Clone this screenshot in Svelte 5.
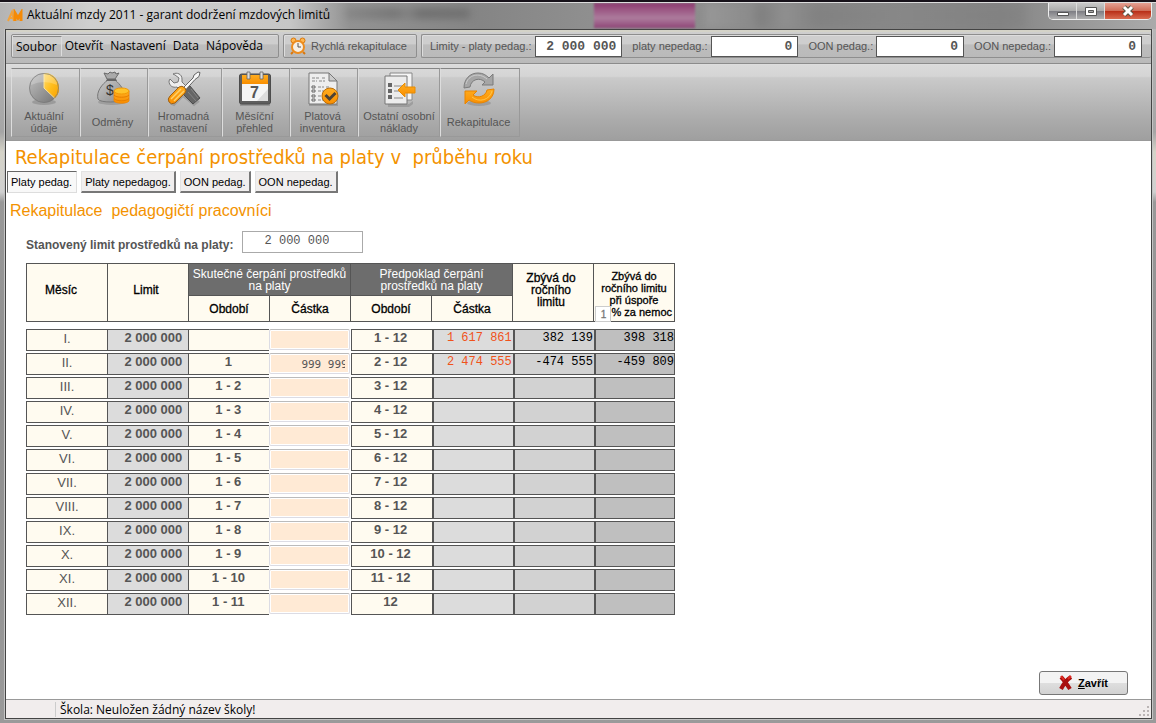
<script lang="ts">
  interface Row {
    month: string;
    actual: string;
    amount?: string;
    forecast: string;
    expected?: string;
    left?: string;
    leftSick?: string;
  }

  const menu = ["Soubor", "Otevřít", "Nastavení", "Data", "Nápověda"];

  const limits = [
    { id: "lim-ped", label: "Limity - platy pedag.:", value: "2 000 000" },
    { id: "lim-neped", label: "platy nepedag.:", value: "0" },
    { id: "oon-ped", label: "OON pedag.:", value: "0" },
    { id: "oon-neped", label: "OON nepedag.:", value: "0" },
  ];

  const tools = [
    { icon: "pie", label: "Aktuální údaje", width: 69 },
    { icon: "bag", label: "Odměny", width: 68 },
    { icon: "tools", label: "Hromadná nastavení", width: 74 },
    { icon: "calendar", label: "Měsíční přehled", width: 68 },
    { icon: "inventory", label: "Platová inventura", width: 68 },
    { icon: "costs", label: "Ostatní osobní náklady", width: 82 },
    { icon: "refresh", label: "Rekapitulace", width: 80 },
  ];

  const tabs = ["Platy pedag.", "Platy nepedagog.", "OON pedag.", "OON nepedag."];
  let activeTab = $state(0);

  let limit = $state("2 000 000");
  let sickPercent = $state("1");

  let rows: Row[] = $state([
    { month: "I.", actual: "", forecast: "1 - 12", expected: "1 617 861", left: "382 139", leftSick: "398 318" },
    { month: "II.", actual: "1", amount: "999 999", forecast: "2 - 12", expected: "2 474 555", left: "-474 555", leftSick: "-459 809" },
    { month: "III.", actual: "1 - 2", forecast: "3 - 12" },
    { month: "IV.", actual: "1 - 3", forecast: "4 - 12" },
    { month: "V.", actual: "1 - 4", forecast: "5 - 12" },
    { month: "VI.", actual: "1 - 5", forecast: "6 - 12" },
    { month: "VII.", actual: "1 - 6", forecast: "7 - 12" },
    { month: "VIII.", actual: "1 - 7", forecast: "8 - 12" },
    { month: "IX.", actual: "1 - 8", forecast: "9 - 12" },
    { month: "X.", actual: "1 - 9", forecast: "10 - 12" },
    { month: "XI.", actual: "1 - 10", forecast: "11 - 12" },
    { month: "XII.", actual: "1 - 11", forecast: "12" },
  ]);
</script>

{#snippet toolIcon(name: string)}
  <svg class="tool-icon" viewBox="0 0 36 36" aria-hidden="true">
    {#if name === "pie"}
      <ellipse cx="18" cy="31" rx="12" ry="3" fill="#777" opacity=".45" />
      <circle cx="18" cy="17" r="15" fill="url(#grey)" />
      <path d="M18 17V2a15 15 0 0 1 11 25.300z" fill="url(#gold)" />
      <path d="M18 2v15l11 10.500" fill="none" stroke="#fbe29a" />
      <circle cx="18" cy="17" r="14.500" fill="none" stroke="#777" opacity=".7" />
      <path d="M5 14a13 11 0 0 1 26 0q-13-6-26 0z" fill="#fff" opacity=".22" />
    {:else if name === "bag"}
      <ellipse cx="17" cy="31" rx="14" ry="3" fill="#777" opacity=".4" />
      <path d="M13 9C7 13 1 21 3 28c1 4 24 4 26 0 2-8-4-15-9-19z" fill="url(#bag)" stroke="#777" />
      <path d="M12 8 9 2l4 1 2-2 2 1 3-1 1 2 3-1-4 6z" fill="#aaa" stroke="#696969" />
      <path d="M12 8h9l1 2H11z" fill="#666" />
      <text x="11" y="24" class="dollar">$</text>
      <path d="M19 20v10c2 3 13 3 15 0V20z" fill="url(#coin)" stroke="#f08500" stroke-width=".8" />
      <ellipse cx="26.500" cy="20" rx="7.500" ry="3" fill="#ffc329" stroke="#f39a05" />
      <path d="M19 24c2 3 13 3 15 0M19 27.500c2 3 13 3 15 0" fill="none" stroke="#e77e00" />
    {:else if name === "tools"}
      <path d="m4 32 4 2 9-9 11 9 5-4" fill="none" stroke="#777" stroke-width="2" opacity=".4" />
      <path d="m19 19 5-4 10 12-7 6-10-10z" fill="#666" stroke="#4d4d4d" />
      <path d="m22 21 8 9m-5-12 7 9" stroke="#858585" />
      <path d="M7 3c4-2 9 0 9 5v3l5 5-5 5-5-5c-4 1-8-1-8-6l1-2 4 4 4-1 1-4-4-3z" fill="#eee" stroke="#777" />
      <path d="m17 17 10-10 1-3 4-3 2 .5-1 4-4 3-9 10z" fill="#f7f7f7" stroke="#666" />
      <path d="M13 16q3-2 6 1 2 3 0 5L9 32q-4 2-6-1t1-6z" fill="url(#coin)" stroke="#9d6015" />
      <path d="m5 28 10-10m-7 12 10-10" stroke="#ffd16a" stroke-width="1.500" />
    {:else if name === "calendar"}
      <path d="M3 33h30v2H3z" fill="#777" opacity=".5" />
      <rect x="2.500" y="3" width="31" height="30" rx="2" fill="#5e5e5e" stroke="#4c4c4c" />
      <path d="M5 13h26v17H5z" fill="#f6f6f6" />
      <path d="M20 30 31 18v12z" fill="#ddd" />
      <path d="M5 4h26v9H5z" fill="url(#coin)" />
      <path d="M10 1h3v7h-3zM23 1h3v7h-3z" fill="#ddd" stroke="#666" stroke-width=".8" />
      <text x="13" y="27" class="day">7</text>
    {:else if name === "inventory"}
      <path d="M4 33h29v2H4z" fill="#777" opacity=".45" />
      <path d="M4 2h20l8 8v23H4z" fill="#eee" stroke="#777" />
      <path d="M24 2v8h8z" fill="#ccc" stroke="#777" />
      <path d="M7 7h8m2 0h4M7 10h5m2 0h6M13 16h6m2 0h4M13 20h7M13 25h5M13 29h6" stroke="#888" stroke-dasharray="3 1" />
      <path d="M7 15h3v2H7zM7 19h3v2H7zM7 24h3v2H7zM7 28h3v2H7z" fill="none" stroke="#666" />
      <circle cx="25" cy="25" r="8" fill="url(#coin)" stroke="#b96d0a" />
      <path d="m20.500 24 4 4 6-6" fill="none" stroke="#4d4335" stroke-width="3" />
    {:else if name === "costs"}
      <path d="M7 33h21l4-3v3l-4 3H7z" fill="#777" opacity=".4" />
      <path d="M9 2h22v27H9z" fill="#f5f5f5" stroke="#888" />
      <path d="M4 5h22v28H4z" fill="#ececec" stroke="#777" />
      <path d="M7 12h4v4H7zM7 18h4v4H7zM7 24h4v4H7z" fill="#666" />
      <path d="M13 15h9M13 20h9M13 27h9" stroke="#888" />
      <path d="M17 19 24 12v4h10v6H24v4z" fill="url(#coin)" stroke="#e88b00" />
    {:else if name === "refresh"}
      <ellipse cx="18" cy="32" rx="12" ry="3" fill="#777" opacity=".4" />
      <path d="M3 17C3 8 9 2 17 2c5 0 8 2 11 5l4-4v11H21l3-3c-5-5-14-3-15 5z" fill="#a6a6a6" stroke="#7b7b7b" />
      <path d="M5 13C7 4 18 1 26 8" fill="none" stroke="#cdcdcd" />
      <path d="M33 18c0 9-7 14-15 14-4 0-7-1-10-3l-4 4V20h12l-4 4c5 4 13 1 14-5z" fill="url(#coin)" stroke="#e88400" />
      <path d="M31 20c-2 9-13 12-20 6" fill="none" stroke="#ffc54a" />
    {/if}
  </svg>
{/snippet}

<svg class="defs" aria-hidden="true">
  <defs>
    <linearGradient id="grey" x1="0" y1="0" x2="1" y2="1">
      <stop offset="0" stop-color="#c4c4c4" />
      <stop offset=".5" stop-color="#9a9a9a" />
      <stop offset="1" stop-color="#707070" />
    </linearGradient>
    <linearGradient id="bag" x1="0" y1="0" x2="1" y2="1">
      <stop offset="0" stop-color="#c8c8c8" />
      <stop offset="1" stop-color="#8c8c8c" />
    </linearGradient>
    <linearGradient id="gold" x1="0" y1="0" x2="1" y2="1">
      <stop offset="0" stop-color="#ffdd70" />
      <stop offset=".5" stop-color="#ffbe1e" />
      <stop offset="1" stop-color="#f8a000" />
    </linearGradient>
    <linearGradient id="coin" x1="0" y1="0" x2="0" y2="1">
      <stop offset="0" stop-color="#ffad1f" />
      <stop offset="1" stop-color="#f98e00" />
    </linearGradient>
  </defs>
</svg>

<div class="window">
  <header class="titlebar">
    <div class="reflection word"></div>
    <div class="reflection pink"></div>
    <div class="reflection shade"></div>
    <svg class="app-icon" viewBox="0 0 16 14" aria-hidden="true">
      <path d="m1 12 4-9 2 9M3 9h4" fill="none" stroke="#f2a23a" stroke-width="2" />
      <path d="M8 12V4l3 5 3-5v8" fill="none" stroke="#f58a06" stroke-width="3" />
    </svg>
    <span class="caption">Aktuální mzdy 2011 - garant dodržení mzdových limitů</span>
    <div class="window-buttons">
      <button aria-label="Minimalizovat">
        <svg width="14" height="14" viewBox="0 0 14 14"><path d="M1.500 8.500h11v3h-11z" fill="#fff" stroke="#555" /></svg>
      </button>
      <button aria-label="Maximalizovat">
        <svg width="14" height="14" viewBox="0 0 14 14">
          <path d="M1.500 3.500h11v8h-11z" fill="#fff" stroke="#555" />
          <path d="M4.500 6.500h5v2h-5z" fill="#aaa" stroke="#555" />
        </svg>
      </button>
      <button class="close" aria-label="Zavřít okno">
        <svg width="14" height="14" viewBox="0 0 14 14">
          <path d="m3 3 8 8m0-8-8 8" stroke="#554" stroke-width="5" />
          <path d="m3 3 8 8m0-8-8 8" stroke="#fff" stroke-width="3" />
        </svg>
      </button>
    </div>
  </header>

  <div class="client">
    <div class="menubar">
      <nav class="group menu">
        {#each menu as item, i}
          <button class:first={i === 0}>{item}</button>
        {/each}
      </nav>
      <button class="group quick">
        <svg width="16" height="18" viewBox="0 0 16 18" aria-hidden="true">
          <path d="m3 15-2 2m12-2 2 2" stroke="#d9770b" stroke-width="2" />
          <circle cx="3.500" cy="3.500" r="2.500" fill="#ffb74e" stroke="#d9770b" />
          <circle cx="12.500" cy="3.500" r="2.500" fill="#ffb74e" stroke="#d9770b" />
          <circle cx="8" cy="10" r="6" fill="#f6efe4" stroke="#ee8c1d" stroke-width="2" />
          <path d="M8 6v4h3" fill="none" stroke="#555" />
        </svg>
        Rychlá rekapitulace
      </button>
      <div class="group limits">
        {#each limits as item}
          <label for={item.id}>{item.label}</label>
          <input id={item.id} bind:value={item.value} />
        {/each}
      </div>
    </div>

    <div class="toolbar">
      {#each tools as tool}
        <button style="width: {tool.width}px">
          {@render toolIcon(tool.icon)}
          <span>{tool.label}</span>
        </button>
      {/each}
    </div>

    <main>
      <h1>Rekapitulace čerpání prostředků na platy v&nbsp; průběhu roku</h1>

      <div class="tabs" role="tablist">
        {#each tabs as tab, i}
          <button role="tab" aria-selected={activeTab === i} class:active={activeTab === i} onclick={() => (activeTab = i)}>
            {tab}
          </button>
        {/each}
      </div>

      <h2>Rekapitulace&nbsp; pedagogičtí pracovníci</h2>

      <div class="limit-line">
        <label for="limit">Stanovený limit prostředků na platy:</label>
        <input id="limit" bind:value={limit} />
      </div>

      <table>
        <thead>
          <tr>
            <th class="tall month-head" rowspan="2">Měsíc</th>
            <th class="tall" rowspan="2">Limit</th>
            <th class="dark" colspan="2">Skutečné čerpání prostředků na platy</th>
            <th class="dark" colspan="2">Předpoklad čerpání prostředků na platy</th>
            <th class="tall" rowspan="2">Zbývá do ročního limitu</th>
            <th class="tall sick" rowspan="2">
              Zbývá do ročního limitu při úspoře
              <label><input bind:value={sickPercent} />% za nemoc</label>
            </th>
          </tr>
          <tr>
            <th>Období</th>
            <th>Částka</th>
            <th>Období</th>
            <th>Částka</th>
          </tr>
        </thead>
        <tbody>
          {#each rows as row}
            <tr>
              <td class="month">{row.month}</td>
              <td class="limit">2 000 000</td>
              <td class="period">{row.actual}</td>
              <td class="entry"><input aria-label="Částka {row.month}" bind:value={row.amount} /></td>
              <td class="period">{row.forecast}</td>
              <td class="money expected">{row.expected ?? ""}</td>
              <td class="money left">{row.left ?? ""}</td>
              <td class="money left-sick">{row.leftSick ?? ""}</td>
            </tr>
          {/each}
        </tbody>
      </table>

      <button class="close-form">
        <svg width="14" height="16" viewBox="0 0 14 16" aria-hidden="true">
          <path d="M2 2q3 3 9 12M12 2Q6 6 2 14" fill="none" stroke="#a80d0d" stroke-width="4" />
          <path d="m2 1 3 4M12 1 9 4" stroke="#e02b22" stroke-width="2" />
        </svg>
        <span><u>Z</u>avřít</span>
      </button>
    </main>

    <footer>
      <span class="panel"></span>
      <span>Škola: Neuložen žádný název školy!</span>
      <svg class="grip" width="12" height="12" viewBox="0 0 12 12" aria-hidden="true">
        <path d="M9 1h2v2H9zM5 5h2v2H5zM9 5h2v2H9zM1 9h2v2H1zM5 9h2v2H5zM9 9h2v2H9z" fill="#bbb5b5" />
      </svg>
    </footer>
  </div>
</div>

<style>
  :global(body) {
    margin: 0;
    background: #999;
  }

  * {
    box-sizing: border-box;
  }

  button,
  input {
    font: inherit;
    color: inherit;
    margin: 0;
  }

  .defs {
    position: absolute;
    width: 0;
    height: 0;
  }

  .window {
    min-height: 100vh;
    display: flex;
    flex-direction: column;
    padding: 0 4px 4px 5px;
    border-top: 2px solid #17121a;
    background: linear-gradient(#bbb 0, #a5a5a5 130px, #d5d3c8 150px, #d0d0d0 190px, #999 200px, #8e8e8e 400px, #9a9a9a);
    font-family: "Liberation Sans", Arial, sans-serif;
    font-size: 12px;
    color: #555;
  }

  .titlebar {
    position: relative;
    height: 27px;
    margin: 0 -4px 0 -5px;
    padding-left: 7px;
    display: flex;
    align-items: center;
    gap: 4px;
    overflow: hidden;
    border-top: 1px solid #ddd;
    background: linear-gradient(90deg, #b4b4b4, #cfcfcf 90px, #c6c6c6 290px, #939393 350px, #858585 480px, #8f8f8f 590px, #858585 1000px, #aaa);
  }

  .caption {
    position: relative;
    flex: 1;
    font-family: "Open Sans", "Segoe UI", sans-serif;
    font-size: 12px;
    line-height: 16px;
    margin-bottom: 2px;
    color: #000;
  }

  .app-icon {
    position: relative;
    width: 16px;
    height: 14px;
  }

  .reflection {
    position: absolute;
    top: 0;
    height: 25px;
    filter: blur(4px);
  }

  .word {
    left: 345px;
    width: 125px;
    top: 6px;
    height: 9px;
    background: linear-gradient(90deg, #777, #555 40%, #777 50%, #4a4a4a 60%, #555);
    opacity: 0.5;
  }

  .pink {
    left: 594px;
    width: 101px;
    background: linear-gradient(#8d3a70, #ad7c9d 60%, #8f4577);
    filter: blur(1px);
  }

  .shade {
    left: 705px;
    width: 320px;
    background: linear-gradient(90deg, #aaa, #8a8a8a 15%, #6d6d6d 17%, #999 25%, #777 35%, #888 60%, #7c7c7c);
    opacity: 0.4;
  }

  .window-buttons {
    position: relative;
    align-self: flex-start;
    display: flex;
    height: 17px;
    margin-right: 4px;
    border: 1px solid #eee;
    border-top: 0;
    border-radius: 0 0 5px 5px;
    overflow: hidden;
  }

  .window-buttons button {
    width: 28px;
    padding: 0;
    border: 0;
    border-right: 1px solid #ddd;
    display: grid;
    place-items: center;
    background: linear-gradient(#c9c9c9, #aaa 50%, #7e7e84 52%, #b0b0b0);
  }

  .window-buttons .close {
    width: 46px;
    border: 0;
    background: linear-gradient(#e5a193, #cf6d58 48%, #b92f18 52%, #d96b50);
  }

  .client {
    flex: 1;
    display: flex;
    flex-direction: column;
    border: 1px solid #444;
    box-shadow: 0 0 0 1px #c4c4c4;
    background: #fff;
  }

  .menubar {
    height: 34px;
    display: flex;
    align-items: flex-start;
    gap: 4px;
    padding: 2px 0 0 5px;
    border-top: 2px solid #d4d3c8;
    border-bottom: 1px solid #8b8b8b;
    background: linear-gradient(#cfcfcf, #b9b9b9);
  }

  .group {
    height: 24px;
    flex: none;
    display: flex;
    align-items: center;
    border: 1px solid #8e8e8e;
    border-radius: 2px;
    background: linear-gradient(#cecece 40%, #bdbdbd 45%, #bababa);
    box-shadow: inset 1px 1px #ddd;
  }

  .menu {
    width: 268px;
    padding-left: 1px;
    font-family: "Open Sans", "Segoe UI", sans-serif;
    color: #000;
  }

  .menu button {
    height: 20px;
    padding: 0 4px 0 3px;
    border: 0;
    background: none;
    line-height: 18px;
  }

  .menu .first {
    border-top: 1px solid #888;
    border-right: 1px solid #ddd;
  }

  .quick {
    width: 134px;
    gap: 5px;
    padding: 0 6px;
    font-size: 11px;
    white-space: nowrap;
  }

  .limits {
    flex: 1;
    min-width: 0;
    padding: 0 9px 0 8px;
    border-right: 0;
    font-size: 11px;
    white-space: nowrap;
  }

  .limits input {
    width: 89px;
    min-width: 0;
    height: 21px;
    margin: 0 10px 0 3px;
    padding: 0 5px;
    border: 1px solid #555;
    background: #fff;
    font: bold 13px "Liberation Mono", monospace;
    text-align: right;
  }

  .limits input:last-child {
    margin-right: 0;
  }

  .toolbar {
    height: 77px;
    display: flex;
    align-items: flex-start;
    padding: 3px 5px;
    border-top: 1px solid #ddd;
    border-bottom: 1px solid #999;
    background: linear-gradient(#dadada, #d5d5d5 15%, #cacaca 17%, #aaa 75%, #9f9f9f);
  }

  .toolbar button {
    height: 69px;
    display: flex;
    flex-direction: column;
    align-items: center;
    padding: 1px 5px 1px 2px;
    border: 1px solid #999;
    border-top-color: #858585;
    border-left-color: #ddd;
    background: none;
    font-size: 11px;
    line-height: 12px;
  }

  .toolbar button:nth-child(6) {
    padding: 1px;
  }

  .toolbar span {
    flex: 1;
    display: flex;
    align-items: center;
    text-align: center;
  }

  .tool-icon {
    width: 36px;
    height: 38px;
    flex: none;
  }

  .dollar {
    font: 14px "Liberation Sans", sans-serif;
    fill: #333;
  }

  .day {
    font: bold 16px "Liberation Sans", sans-serif;
    fill: #555;
  }

  main {
    flex: 1;
    display: flex;
    flex-direction: column;
    align-items: flex-start;
  }

  h1 {
    margin: 4px 0 2px 9px;
    font: 20px/24px "DejaVu Sans Condensed", Tahoma, sans-serif;
    color: #f39200;
  }

  h2 {
    margin: 8px 0 0 4px;
    font-size: 16px;
    line-height: 20px;
    font-weight: normal;
    color: #f39200;
  }

  .tabs {
    display: flex;
    gap: 4px;
    margin-left: 1px;
    font-size: 11px;
    color: #000;
  }

  .tabs button {
    height: 22px;
    padding: 0 3px;
    border: 1px solid #e3e3e3;
    border-right: 2px solid #777;
    border-bottom: 2px solid #777;
    background: #f0eeee;
  }

  .tabs .active {
    padding: 0 4px 0 3px;
    border: 1px solid #ddd;
    border-top-color: #666;
    border-left-color: #666;
    background: #f8f8f8;
  }

  .limit-line {
    display: flex;
    align-items: center;
    gap: 9px;
    margin: 10px 0 10px 20px;
    font-weight: bold;
  }

  .limit-line label {
    padding-top: 6px;
  }

  .limit-line input {
    width: 121px;
    height: 22px;
    padding: 0 33px 2px 0;
    border: 1px solid #aaa;
    font: 12px "Liberation Mono", monospace;
    text-align: right;
  }

  table {
    display: block;
    width: 649px;
    margin-left: 20px;
    font-size: 13px;
  }

  thead {
    display: grid;
    grid-template-columns: repeat(8, 1fr);
    grid-template-rows: 32px 26px;
    border: solid #555;
    border-width: 1px 0 0 1px;
    margin-bottom: 7px;
    font-size: 12px;
    color: #000;
  }

  thead tr {
    display: contents;
  }

  th {
    display: flex;
    align-items: center;
    justify-content: center;
    padding: 0 1px;
    border: solid #555;
    border-width: 0 1px 1px 0;
    background: #fffbf0;
    font-weight: normal;
    line-height: 12px;
    text-align: center;
    -webkit-text-stroke: 0.3px;
  }

  .tall {
    grid-row: span 2;
    padding: 0 12px 6px 8px;
  }

  .month-head {
    padding-right: 20px;
  }

  .dark {
    grid-column: span 2;
    background: #6d6d6d;
    color: #fff;
    -webkit-text-stroke: 0;
  }

  .sick {
    display: block;
    padding: 6px 0 0;
    font-size: 11px;
  }

  .sick label {
    display: flex;
    justify-content: flex-end;
    padding-right: 2px;
    white-space: nowrap;
  }

  .sick input {
    width: 16px;
    height: 16px;
    padding: 0;
    border: 1px solid #ccc;
    text-align: center;
    font-size: 10px;
    color: #777;
  }

  tbody {
    display: grid;
    gap: 2px;
  }

  tbody tr {
    display: grid;
    grid-template-columns: repeat(8, 1fr);
    height: 22px;
  }

  td {
    padding: 0;
    border: solid #555;
    border-width: 1px 0 1px 1px;
    background: #fffbf0;
    line-height: 16px;
    text-align: center;
  }

  .month {
    line-height: 18px;
  }

  .limit {
    padding-right: 6px;
    background: #dcdcdc;
    font-weight: bold;
    text-align: right;
  }

  .period {
    padding-right: 2px;
    font-weight: bold;
  }

  .entry {
    padding-right: 1px;
    border: 0;
    background: none;
  }

  .entry input {
    display: block;
    width: 100%;
    height: 21px;
    padding: 2px 4px 0 31px;
    border: 1px solid #dcdce4;
    border-top-color: #bbb;
    border-radius: 2px;
    background: #ffead5;
    box-shadow: inset 0 0 0 1px #fff;
    font: 11px "DejaVu Sans Mono", monospace;
  }

  .money {
    padding-right: 1px;
    border-left-width: 2px;
    font-family: "Liberation Mono", monospace;
    font-size: 12px;
    text-align: right;
    white-space: nowrap;
    color: #000;
  }

  .expected {
    background: #dcdcdc;
    color: #f0521a;
  }

  .left {
    background: #d2d2d2;
  }

  .left-sick {
    padding-right: 0;
    border-right-width: 1px;
    background: #bfbfbf;
  }

  .close-form {
    height: 24px;
    width: 89px;
    display: flex;
    align-items: center;
    justify-content: center;
    gap: 5px;
    margin: auto 23px 4px auto;
    padding: 0;
    border: 1px solid #777;
    border-radius: 3px;
    background: linear-gradient(#f3f3f3 50%, #dedede 52%, #d2d2d2);
    font-size: 11px;
    font-weight: bold;
    color: #000;
  }

  footer {
    height: 19px;
    display: flex;
    align-items: center;
    gap: 4px;
    border-top: 1px solid #999;
    background: #f1eded;
    font-family: "Open Sans", "Segoe UI", sans-serif;
    font-size: 12px;
    color: #000;
  }

  .panel {
    width: 50px;
    height: 15px;
    border-right: 1px solid #ccc;
  }

  .grip {
    margin: auto 1px 1px auto;
  }
</style>
